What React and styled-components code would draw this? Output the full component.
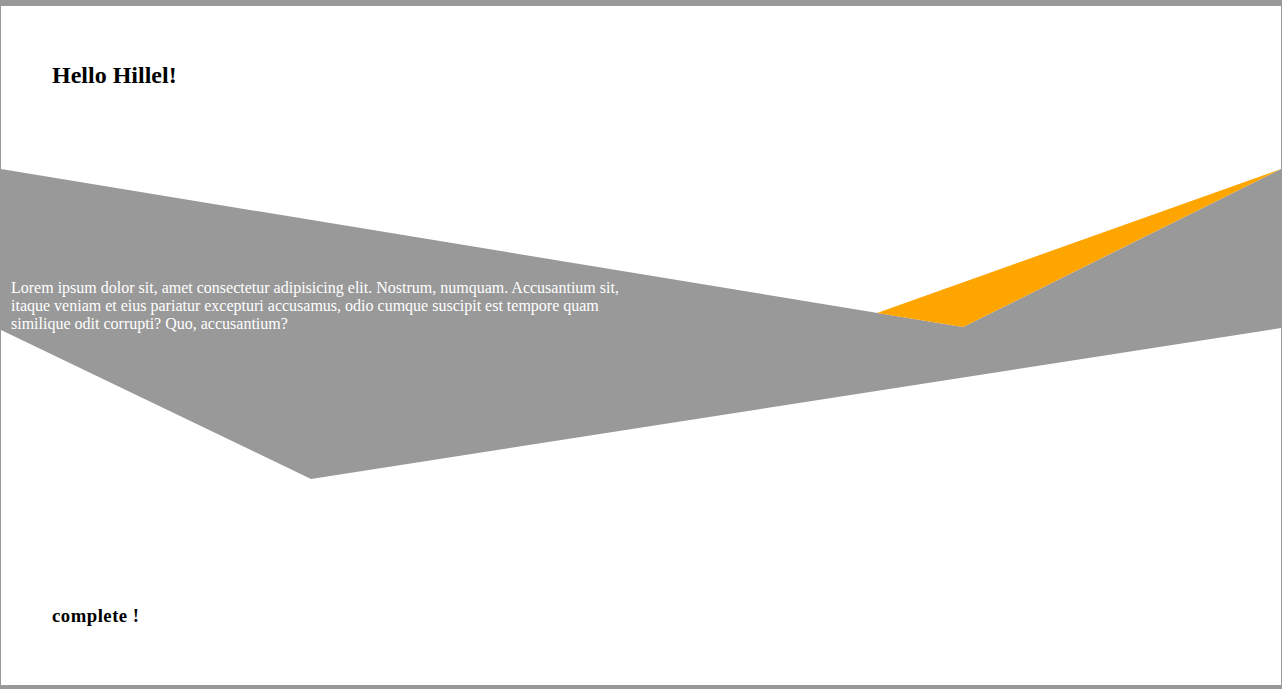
import React from 'react'
import styled, { createGlobalStyle } from 'styled-components'

const GlobalStyle = createGlobalStyle`
  html, body {
    margin: 0;
    padding: 0;
    background: #fff;
  }
  body {
    font-family: "Liberation Serif", "Times New Roman", serif;
  }
`

const Frame = styled.div`
  box-sizing: border-box;
  width: 1282px;
  height: 689px;
  border-style: solid;
  border-color: #999999;
  border-width: 6px 1px 4px 1px;
  display: flex;
  flex-direction: column;
  overflow: hidden;
`

const Header = styled.header`
  height: 163px;
  padding: 56px 0 0 51px;
  box-sizing: border-box;
  h2 {
    margin: 0;
    font-size: 24px;
    font-weight: bold;
    color: #000;
  }
`

const Band = styled.section`
  position: relative;
  height: 310px;
  flex-shrink: 0;
`

const GreyShape = styled.div`
  height: 100%;
  background: #999999;
  clip-path: polygon(0 0, 962px 158px, 100% 0, 100% 159px, 310px 100%, 0 161px);
`

const Text = styled.p`
  margin: 0;
  width: 640px;
  box-sizing: border-box;
  padding: 110px 10px 0 10px;
  color: #ffffff;
  font-size: 16px;
  line-height: 18px;
`

const OrangeWedge = styled.div`
  position: absolute;
  inset: 0;
  background: #ffa500;
  clip-path: polygon(876px 144px, 100% 0, 962px 158px);
`

const Footer = styled.footer`
  flex: 1;
  padding: 126px 0 0 51px;
  h3 {
    margin: 0;
    font-size: 18.72px;
    font-weight: bold;
    letter-spacing: 0.5px;
    color: #000;
  }
`

const App = () => {
  return (
    <>
      <GlobalStyle />
      <Frame>
        <Header>
          <h2>Hello Hillel!</h2>
        </Header>

        <Band>
          <GreyShape>
            <Text>
              Lorem ipsum dolor sit, amet consectetur adipisicing elit. Nostrum, numquam. Accusantium sit,
              itaque veniam et eius pariatur excepturi accusamus, odio cumque suscipit est tempore quam
              similique odit corrupti? Quo, accusantium?
            </Text>
          </GreyShape>
          <OrangeWedge />
        </Band>

        <Footer>
          <h3>complete !</h3>
        </Footer>
      </Frame>
    </>
  )
}

export default App
